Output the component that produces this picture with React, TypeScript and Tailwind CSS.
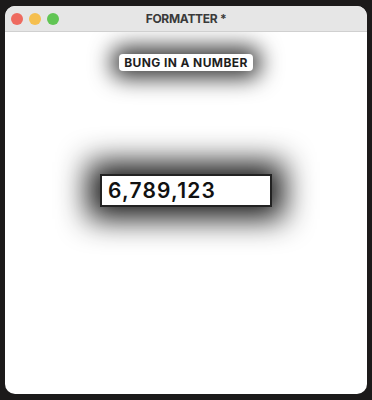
import React from "react";

const App = () => {
  return (
    <div className="w-[372px] h-[400px] bg-[#1c1a1a] pt-[6px] px-[5px] pb-[6px] font-['Inter','Liberation_Sans',sans-serif]">
      <div className="h-full rounded-[10px] overflow-hidden bg-white flex flex-col">
        <div className="h-[26px] bg-[#e6e6e6] border-b border-[#d0d0d0] flex items-center relative">
          <div className="flex gap-[6px] pl-[6px]">
            <span className="w-[12px] h-[12px] rounded-full bg-[#ee6a5f]" />
            <span className="w-[12px] h-[12px] rounded-full bg-[#f5bf4f]" />
            <span className="w-[12px] h-[12px] rounded-full bg-[#61c554]" />
          </div>
          <div className="absolute inset-0 flex items-center justify-center text-[12px] font-bold text-[#3a3a3a] tracking-[-0.3px]">
            FORMATTER *
          </div>
        </div>
        <div className="flex-1 flex flex-col items-center">
          <button className="mt-[22px] h-[17px] px-[5px] rounded-[4px] bg-white text-[12px] font-bold text-[#1e1e1e] leading-none tracking-[0.4px] shadow-[0_0_22px_7px_rgba(0,0,0,0.8)]">
            BUNG IN A NUMBER
          </button>
          <input
            className="mt-[103px] w-[172px] h-[33px] border-2 border-[#222] bg-white px-[6px] text-[21px] font-semibold text-[#111] tracking-[1.2px] outline-none shadow-[0_0_30px_12px_rgba(0,0,0,0.9)]"
            defaultValue="6,789,123"
          />
        </div>
      </div>
    </div>
  );
};

export default App;
